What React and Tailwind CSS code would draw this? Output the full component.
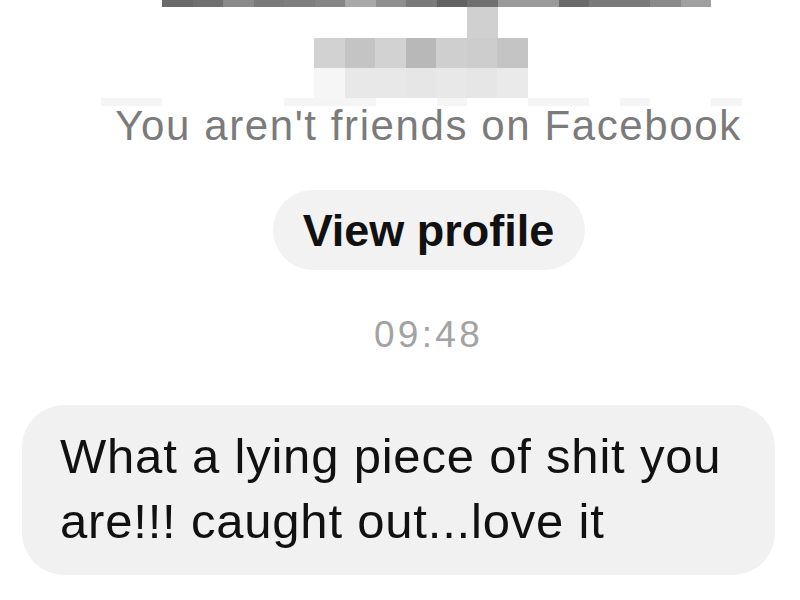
import React from "react"

// censored name, drawn as pixel blocks
const topRow = [
  "bg-[#6a6a6a]", "bg-[#707070]", "bg-[#8a8a8a]", "bg-[#7a7a7a]", "bg-[#7e7e7e]", "bg-[#858585]",
  "bg-[#a8a8a8]", "bg-[#8e8e8e]", "bg-[#7a7a7a]", "bg-[#626262]", "bg-[#707070]", "bg-[#9a9a9a]",
  "bg-[#9a9a9a]", "bg-[#6a6a6a]", "bg-[#7a7a7a]", "bg-[#7a7a7a]", "bg-[#8a8a8a]", "bg-[#a0a0a0]",
]
const midRow = [
  "bg-[#d2d2d2]", "bg-[#c4c4c4]", "bg-[#d2d2d2]", "bg-[#b8b8b8]", "bg-[#cfcfcf]", "bg-[#cdcdcd]", "bg-[#c4c4c4]",
]
const lowRow = [
  "bg-[#f6f6f6]", "bg-[#e8e8e8]", "bg-[#e8e8e8]", "bg-[#e6e6e6]", "bg-[#e8e8e8]", "bg-[#e6e6e6]", "bg-[#eaeaea]",
]
const faintRow = [
  "bg-[#f5f5f5]", "bg-[#f5f5f5]", "bg-white", "bg-white", "bg-white", "bg-white", "bg-[#f5f5f5]",
  "bg-[#f5f5f5]", "bg-[#f5f5f5]", "bg-white", "bg-white", "bg-[#f5f5f5]", "bg-white", "bg-white",
  "bg-[#f5f5f5]", "bg-[#f5f5f5]", "bg-white", "bg-[#f5f5f5]", "bg-white", "bg-white", "bg-[#f5f5f5]",
]

function Pixels() {
  return (
    <div className="flex flex-col">
      <div className="flex h-[7px] ml-[162px]">
        {topRow.map((c, i) => <div key={i} className={`w-[30.5px] shrink-0 ${c}`} />)}
      </div>
      <div className="flex h-[31px] ml-[467px]">
        <div className="w-[30.5px] bg-[#d0d0d0]" />
      </div>
      <div className="flex h-[30px] ml-[314px]">
        {midRow.map((c, i) => <div key={i} className={`w-[30.5px] shrink-0 ${c}`} />)}
      </div>
      <div className="flex h-[30px] ml-[314px]">
        {lowRow.map((c, i) => <div key={i} className={`w-[30.5px] shrink-0 ${c}`} />)}
      </div>
      <div className="flex h-[8px] ml-[101px]">
        {faintRow.map((c, i) => <div key={i} className={`w-[30.5px] shrink-0 ${c}`} />)}
      </div>
    </div>
  )
}

export default function App() {
  return (
    <div className="w-[800px] h-[600px] bg-white overflow-hidden font-['Liberation_Sans',Arial,sans-serif]">
      <Pixels />

      <div className="flex flex-col items-center pl-[57px]">
        <div className="h-[40px] leading-[40px] text-[42px] tracking-[1.6px] text-[#7b7b7b] whitespace-nowrap">
          You aren't friends on Facebook
        </div>

        <button className="mt-[44px] h-[80px] w-[312px] rounded-full bg-[#f2f2f2] flex items-center justify-center">
          <span className="text-[45px] leading-[45px] font-bold text-[#111111]">View profile</span>
        </button>

        <div className="mt-[48px] h-[34px] leading-[34px] text-[37px] tracking-[3.3px] text-[#a3a3a3]">
          09:48
        </div>
      </div>

      <div className="mt-[53px] ml-[22px] w-[753px] h-[170px] rounded-[42px] bg-[#f1f1f1] pt-[19px] pl-[38px]">
        <p className="text-[49px] leading-[65px] tracking-[0.8px] text-[#111111] whitespace-nowrap">
          What a lying piece of shit you
          <br />
          are!!! caught out...love it
        </p>
      </div>
    </div>
  )
}
